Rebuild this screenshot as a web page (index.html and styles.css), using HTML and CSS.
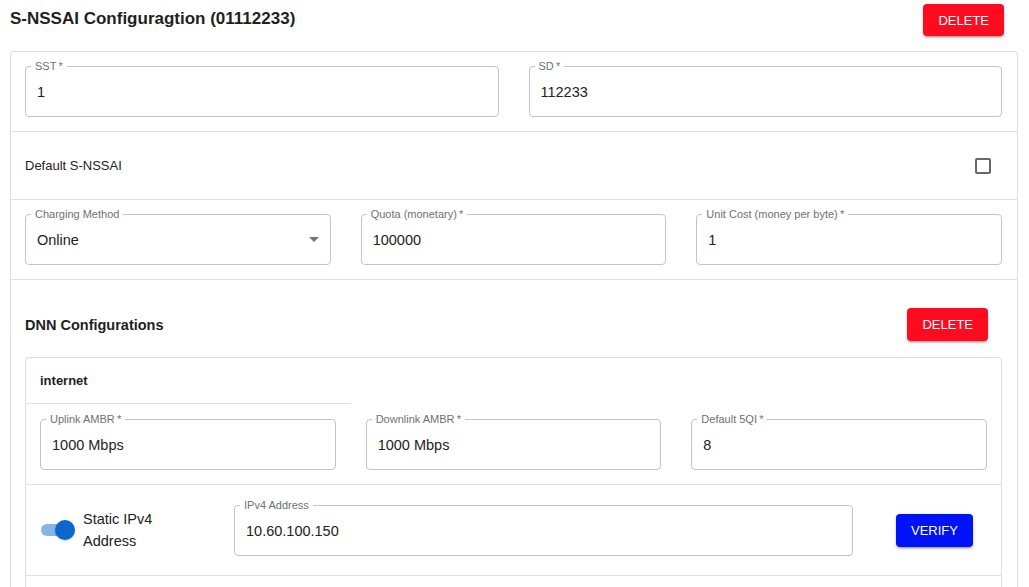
FILE: index.html
```html
<!DOCTYPE html>
<html lang="en">
<head>
<meta charset="utf-8">
<title>S-NSSAI Configuration</title>
<link rel="stylesheet" href="styles.css">
</head>
<body>
<div class="page">
  <div class="top">
    <h2 class="title">S-NSSAI Configuragtion (01112233)</h2>
    <button class="btn btn-red btn-top">DELETE</button>
  </div>
  <div class="card">
    <div class="row grid2">
      <fieldset class="field">
        <legend>SST&thinsp;*</legend>
        <div class="value">1</div>
      </fieldset>
      <fieldset class="field">
        <legend>SD&thinsp;*</legend>
        <div class="value">112233</div>
      </fieldset>
    </div>
    <div class="row-default">
      <span class="default-label">Default S-NSSAI</span>
      <span class="checkbox"></span>
    </div>
    <div class="row grid3">
      <fieldset class="field">
        <legend>Charging Method</legend>
        <div class="value select">
          <span>Online</span>
          <svg class="arrow" width="10" height="5" viewBox="0 0 10 5"><path d="M0 0h10L5 5z" fill="#757575"/></svg>
        </div>
      </fieldset>
      <fieldset class="field">
        <legend>Quota (monetary)&thinsp;*</legend>
        <div class="value">100000</div>
      </fieldset>
      <fieldset class="field">
        <legend>Unit Cost (money per byte)&thinsp;*</legend>
        <div class="value">1</div>
      </fieldset>
    </div>
    <div class="dnn">
      <div class="dnn-head">
        <h3 class="dnn-title">DNN Configurations</h3>
        <button class="btn btn-red btn-dnn">DELETE</button>
      </div>
      <div class="dnn-card">
        <div class="dnn-name">internet</div>
        <div class="dnn-row grid3">
          <fieldset class="field">
            <legend>Uplink AMBR&thinsp;*</legend>
            <div class="value">1000 Mbps</div>
          </fieldset>
          <fieldset class="field">
            <legend>Downlink AMBR&thinsp;*</legend>
            <div class="value">1000 Mbps</div>
          </fieldset>
          <fieldset class="field">
            <legend>Default 5QI&thinsp;*</legend>
            <div class="value">8</div>
          </fieldset>
        </div>
        <div class="ip-row">
          <div class="ip-switch">
            <span class="switch"><span class="knob"></span></span>
            <span class="switch-label">Static IPv4 Address</span>
          </div>
          <fieldset class="field ip-field">
            <legend>IPv4 Address</legend>
            <div class="value">10.60.100.150</div>
          </fieldset>
          <button class="btn btn-blue">VERIFY</button>
        </div>
        <div class="dnn-rest"></div>
      </div>
    </div>
  </div>
</div>
</body>
</html>
```
FILE: styles.css
```css
html, body {
  margin: 0;
  padding: 0;
  height: 587px;
  overflow: hidden;
  background: #ffffff;
}
body {
  font-family: "Liberation Sans", Arial, Helvetica, sans-serif;
  color: #222222;
}
.page {
  padding: 0 11px 0 10px;
}
.top {
  display: flex;
  justify-content: space-between;
  align-items: center;
  padding: 4px 14px 0 0;
  margin-bottom: 15px;
}
.title {
  margin: 0;
  font-size: 17px;
  line-height: 20px;
  font-weight: bold;
  color: #1f1f1f;
  padding-bottom: 2px;
}
.btn {
  height: 33px;
  padding: 0 15px;
  border: none;
  border-radius: 4px;
  font-family: "Liberation Sans", Arial, Helvetica, sans-serif;
  font-size: 13px;
  letter-spacing: 0;
  color: #ffffff;
  box-shadow: 0 3px 1px -2px rgba(0,0,0,0.2), 0 2px 2px 0 rgba(0,0,0,0.14), 0 1px 5px 0 rgba(0,0,0,0.12);
  cursor: pointer;
}
.btn-top {
  height: 32px;
}
.btn-red {
  background: #ff0b1f;
}
.btn-blue {
  background: #0012f7;
  margin-left: 43px;
}
.card {
  border: 1px solid #dedede;
  border-bottom: none;
  border-radius: 4px 4px 0 0;
}
.row {
  border-bottom: 1px solid #e0e0e0;
  padding: 8px 15px 14px 14px;
}
.grid2 {
  display: grid;
  grid-template-columns: 1fr 1fr;
  column-gap: 30px;
}
.grid3 {
  display: grid;
  grid-template-columns: 1fr 1fr 1fr;
  column-gap: 30px;
}
.field {
  margin: 0;
  min-width: 0;
  border: 1px solid #c4c4c4;
  border-radius: 4px;
  padding: 0 11px 0 5px;
}
.field legend {
  font-size: 11px;
  line-height: 13px;
  padding: 0 4px;
  color: #707070;
}
.value {
  box-sizing: border-box;
  height: 43px;
  display: flex;
  align-items: center;
  padding: 0 0 6px 6px;
  font-size: 14.5px;
  color: #222222;
}
.select {
  justify-content: space-between;
}
.arrow {
  display: block;
}
.row-default {
  height: 67px;
  border-bottom: 1px solid #e0e0e0;
  display: flex;
  align-items: center;
  justify-content: space-between;
  padding: 0 26px 0 14px;
}
.default-label {
  font-size: 13px;
  color: #222222;
}
.checkbox {
  box-sizing: border-box;
  width: 16px;
  height: 16px;
  border: 2px solid #676767;
  border-radius: 2px;
}
.dnn {
  padding: 28px 15px 0 14px;
}
.dnn-head {
  display: flex;
  justify-content: space-between;
  align-items: center;
  padding-right: 14px;
  margin-bottom: 16px;
}
.dnn-title {
  margin: 0;
  font-size: 14.5px;
  font-weight: bold;
  color: #1f1f1f;
}
.dnn-card {
  border: 1px solid #dedede;
  border-bottom: none;
  border-radius: 4px 4px 0 0;
}
.dnn-name {
  width: 33.333%;
  box-sizing: border-box;
  height: 46px;
  border-bottom: 1px solid #e0e0e0;
  display: flex;
  align-items: center;
  padding-left: 14px;
  font-size: 13px;
  font-weight: bold;
  color: #1f1f1f;
}
.dnn-row {
  border-bottom: 1px solid #e0e0e0;
  padding: 9px 14px 14px 14px;
}
.ip-row {
  height: 90px;
  border-bottom: 1px solid #e0e0e0;
  display: flex;
  align-items: center;
  padding-left: 15px;
}
.ip-switch {
  width: 193px;
  display: flex;
  align-items: center;
  flex-shrink: 0;
}
.switch {
  width: 33px;
  height: 12px;
  border-radius: 6px;
  background: #84b5e6;
  display: flex;
  align-items: center;
  justify-content: flex-end;
  flex-shrink: 0;
}
.knob {
  width: 20px;
  height: 20px;
  border-radius: 50%;
  background: #0b67cb;
  flex-shrink: 0;
  margin-right: -1px;
  box-shadow: 0 1px 2px rgba(0,0,0,0.2);
}
.switch-label {
  margin-left: 9px;
  width: 100px;
  font-size: 14.5px;
  line-height: 22px;
  color: #222222;
}
.ip-field {
  width: 619px;
  box-sizing: border-box;
  flex-shrink: 0;
  margin-top: -5px;
}
.dnn-rest {
  height: 40px;
}
```
